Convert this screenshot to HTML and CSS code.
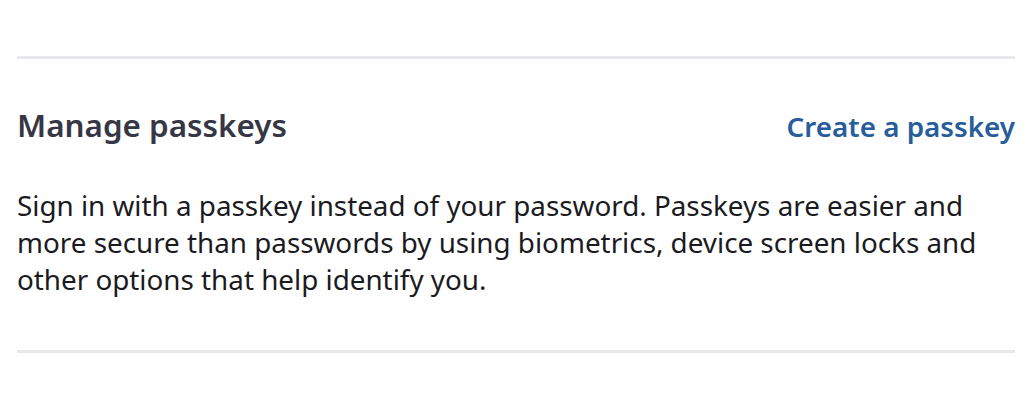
FILE: index.html
```html
<!DOCTYPE html>
<html lang="en">
<head>
<meta charset="utf-8">
<title>Manage passkeys</title>
<link rel="stylesheet" href="styles.css">
</head>
<body>
<main class="page">
  <section class="passkeys">
    <div class="passkeys-header">
      <h2 class="passkeys-title">Manage passkeys</h2>
      <a class="passkeys-link" href="#">Create a passkey</a>
    </div>
    <p class="passkeys-text">Sign in with a passkey instead of your password. Passkeys are easier and more secure than passwords by using biometrics, device screen locks and other options that help identify you.</p>
  </section>
</main>
</body>
</html>
```

FILE: styles.css
```css
* { box-sizing: border-box; }
html, body {
  margin: 0;
  padding: 0;
  background: #ffffff;
}
body {
  font-family: "Noto Sans", "Open Sans", sans-serif;
  color: #1b1b1f;
}
.page {
  padding: 56px 15px 0 17px;
}
.passkeys {
  border-top: 3px solid #e8e8ec;
  border-bottom: 3px solid #e8e8ec;
  padding: 46px 0 52px;
}
.passkeys-header {
  display: flex;
  justify-content: space-between;
  align-items: baseline;
}
.passkeys-title {
  margin: 0;
  font-size: 31.4px;
  font-weight: 600;
  line-height: 40px;
  color: #363645;
}
.passkeys-link {
  font-size: 27.8px;
  font-weight: 600;
  line-height: 40px;
  color: #275d9a;
  text-decoration: none;
}
.passkeys-text {
  margin: 41px 0 0;
  font-size: 27.8px;
  line-height: 37px;
  max-width: 990px;
}
```
